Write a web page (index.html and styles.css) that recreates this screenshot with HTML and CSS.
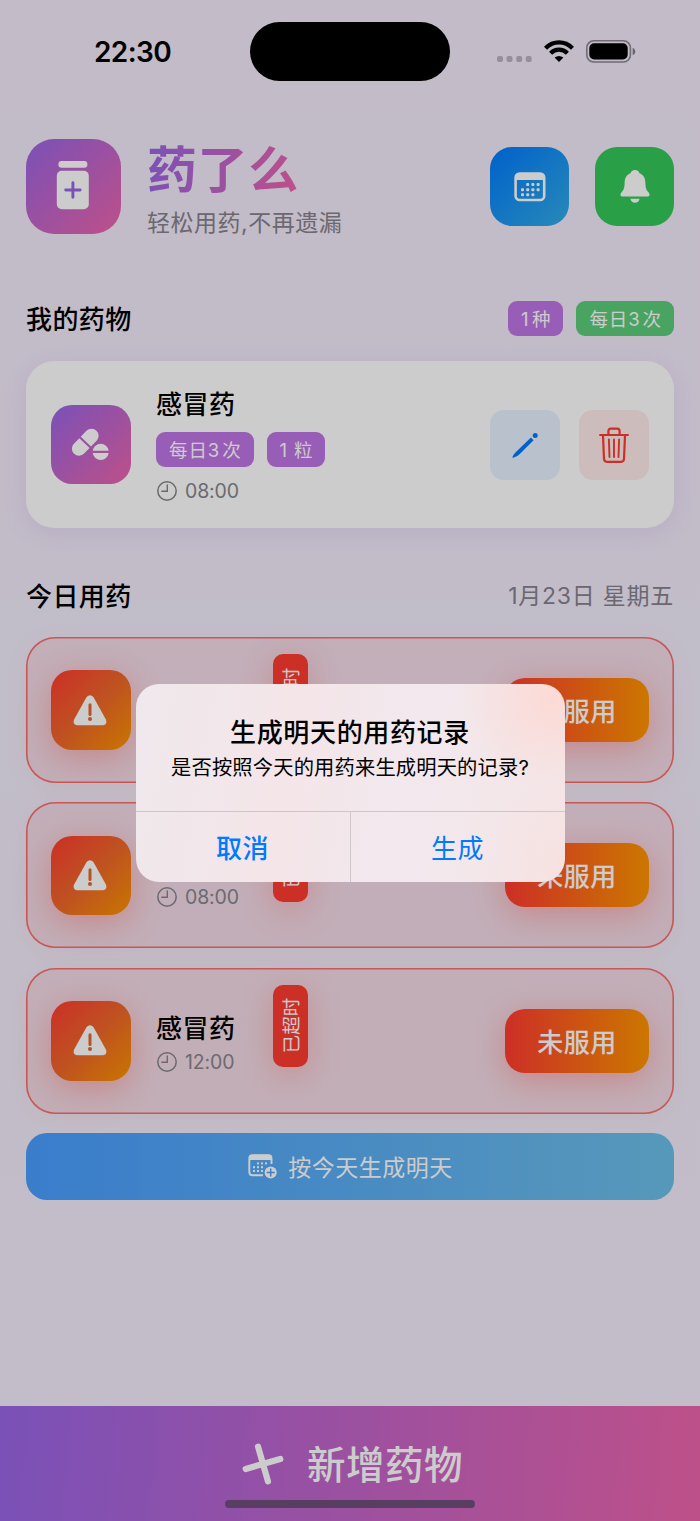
FILE: index.html
```html
<!DOCTYPE html>
<html lang="zh-CN">
<head>
<meta charset="utf-8">
<title>药了么</title>
<link rel="stylesheet" href="styles.css">
</head>
<body>
<svg class="defs" width="0" height="0" aria-hidden="true">
  <symbol id="clock" viewBox="0 0 20 20"><circle cx="10" cy="10" r="9.200" fill="none" stroke="currentColor" stroke-width="1.500"/><path d="M10.300 4v6.300H4.800" fill="none" stroke="currentColor" stroke-width="1.400" stroke-linecap="round"/></symbol>
  <symbol id="warning" viewBox="0 0 34 31"><path d="M13.600 2.100Q17-1.800 20.400 2.100L32.900 24.500Q34.700 30 29.500 30.300H4.500Q-.7 30 1.100 24.500Z" fill="#fff"/><path d="M17 9.700v9.800" stroke="#e7672a" stroke-width="3" stroke-linecap="round"/><circle cx="17" cy="24" r="2" fill="#e7672a"/></symbol>
</svg>
<div class="screen">
  <div class="status">
    <div class="time">22:30</div>
    <div class="island"></div>
    <div class="signals">
      <svg width="35" height="6" viewBox="0 0 35 6" class="dots"><g fill="#bbb3c3"><rect width="6" height="6" rx="2"/><rect x="9.500" width="6" height="6" rx="2"/><rect x="19.200" width="6" height="6" rx="2"/><rect x="28.700" width="6" height="6" rx="2"/></g></svg>
      <svg width="30" height="22" viewBox="0 0 30 22" class="wifi"><g fill="none" stroke="#000" stroke-width="4.300"><path d="M1.500 8.200C9.200.4 20.800.4 28.500 8.200"/><path d="M6.600 13.300C11.500 8.500 18.500 8.500 23.400 13.300"/></g><path d="M15 22l-4.400-4.400q4.400-3.400 8.800 0z"/></svg>
      <svg width="50" height="23" viewBox="0 0 50 23"><rect x=".8" y=".8" width="43.600" height="21.200" rx="7" fill="none" stroke="#8b8592" stroke-width="1.600"/><rect x="3.300" y="3.300" width="38.400" height="16.200" rx="4.800"/><path d="M46.700 7.800q2.600 1.200 2.600 3.700t-2.600 3.700z" fill="#7f7985"/></svg>
    </div>
  </div>

  <main class="content">
    <header class="header">
      <div class="logo"><svg width="34" height="50" viewBox="0 0 34 50"><rect x="2.400" y="0" width="29" height="6.700" rx="3.200" fill="#fff"/><rect x=".8" y="9.700" width="32" height="38.500" rx="5" fill="#fff"/><path d="M16.900 21.800v14.400M9.700 29h14.400" stroke="#9966e6" stroke-width="2.900" stroke-linecap="round"/></svg></div>
      <div class="brand">
        <h1>药了么</h1>
        <p>轻松用药,不再遗漏</p>
      </div>
      <div class="round blue"><svg width="32" height="30" viewBox="0 0 32 30"><rect x="1.600" y="1.600" width="28.600" height="26.400" rx="4" fill="none" stroke="#fff" stroke-width="2.600"/><path d="M1.300 8V4.500Q1.300 1.300 5 1.300h22q3.500 0 3.500 3.200V8z" fill="#fff"/><g fill="#fff"><rect x="12.200" y="11" width="3" height="3" rx="1"/><rect x="17.400" y="11" width="3" height="3" rx="1"/><rect x="22.600" y="11" width="3" height="3" rx="1"/><rect x="7" y="16.200" width="3" height="3" rx="1"/><rect x="12.200" y="16.200" width="3" height="3" rx="1"/><rect x="17.400" y="16.200" width="3" height="3" rx="1"/><rect x="22.600" y="16.200" width="3" height="3" rx="1"/><rect x="7" y="21.300" width="3" height="3" rx="1"/><rect x="12.200" y="21.300" width="3" height="3" rx="1"/><rect x="17.400" y="21.300" width="3" height="3" rx="1"/></g></svg></div>
      <div class="round green"><svg width="30" height="33" viewBox="0 0 30 33"><path fill="#fff" d="M15 0c2.600 0 4.100 1.500 4.500 3.200 4.600 1.700 5.800 5.700 5.900 9.800.1 5 .8 6.900 2.900 9.100 2.100 2.300 1.500 4.500-.9 4.500H2.600C.2 26.600-.4 24.400 1.700 22.100c2.100-2.200 2.800-4.100 2.900-9.100.1-4.100 1.300-8.100 5.900-9.800C10.900 1.500 12.400 0 15 0zM10.400 28.700h9.200c-.4 2.500-2.300 4-4.600 4s-4.200-1.500-4.600-4z"/></svg></div>
    </header>

    <section class="section meds">
      <div class="heading"><h2>我的药物</h2><div class="tags"><span class="tag kinds"><b>1</b>种</span><span class="tag ok">每日<b>3</b>次</span></div></div>
      <div class="card">
        <div class="tile purple"><svg width="38" height="34" viewBox="0 0 38 34"><g transform="rotate(-46 13.500 14)"><path d="M13 6.900H5.200a7.100 7.100 0 0 0 0 14.200H13z" transform="translate(-1 0)" fill="#fff"/><path d="M14 6.900h8.200a7.100 7.100 0 0 1 0 14.200H14z" fill="#fff"/></g><path d="M20.700 22.700a8.100 8.100 0 0 1 16 0zM20.700 25.100a8.100 8.100 0 0 0 16 0z" fill="#fff"/></svg></div>
        <div class="med-info">
          <h3>感冒药</h3>
          <div class="tags"><span class="tag">每日<b>3</b>次</span><span class="tag amount"><b>1</b>粒</span></div>
          <div class="clock"><svg><use href="#clock"/></svg><span>08:00</span></div>
        </div>
        <div class="actions">
          <div class="action edit"><svg width="28" height="28" viewBox="0 0 28 28"><path d="M19.900 6.500l2.700 2.700L8 23.700Q6.500 25 2.200 26.700 1.200 26.800 1.500 25.800 3.200 22.300 4.700 21.300z" fill="#007aff"/><circle cx="24.200" cy="4.400" r="2.500" fill="#007aff"/></svg></div>
          <div class="action remove"><svg width="30" height="36" viewBox="0 0 30 36"><g fill="none" stroke="#ff3b30" stroke-width="2.200" stroke-linecap="round" stroke-linejoin="round"><path d="M1.100 8h27.800M9.400 7.500V4.200q0-2.500 2.500-2.500h6.200q2.500 0 2.500 2.500v3.300M4 8.500l1 23.300q.1 3 3 3h14q2.900 0 3-3l1-23.300"/><path d="M9.900 12.500l.6 17.500M15 12.500v17.500M20.100 12.500l-.6 17.500" stroke-width="1.900"/></g></svg></div>
        </div>
      </div>
    </section>

    <section class="section today">
      <div class="heading"><h2>今日用药</h2><div class="date">1月23日 星期五</div></div>
      <div class="doses">
        <div class="dose"><div class="tile overdue"><svg width="34" height="31"><use href="#warning"/></svg></div><div class="dose-info covered"><h3>感冒药</h3><div class="clock"><svg><use href="#clock"/></svg><span>08:00</span></div></div><div class="late"><span>已超时</span></div><div class="take">未服用</div></div>
        <div class="dose"><div class="tile overdue"><svg width="34" height="31"><use href="#warning"/></svg></div><div class="dose-info"><h3 class="covered">感冒药</h3><div class="clock"><svg><use href="#clock"/></svg><span>08:00</span></div></div><div class="late"><span>已超时</span></div><div class="take">未服用</div></div>
        <div class="dose"><div class="tile overdue"><svg width="34" height="31"><use href="#warning"/></svg></div><div class="dose-info"><h3>感冒药</h3><div class="clock"><svg><use href="#clock"/></svg><span>12:00</span></div></div><div class="late"><span>已超时</span></div><div class="take">未服用</div></div>
      </div>
      <div class="generate"><svg width="29" height="25" viewBox="0 0 29 25"><path d="M15 21.300H4.500Q1.300 21.300 1.300 18V4.300Q1.300 1.200 4.500 1.200h15.800q3.200 0 3.200 3.100V10" fill="none" stroke="#fff" stroke-width="1.900"/><path d="M1 6V3.500Q1 .8 4 .8h17q2.800 0 2.800 2.700V6z" fill="#fff"/><g fill="#fff"><rect x="9" y="8.400" width="2" height="2"/><rect x="13" y="8.400" width="2" height="2"/><rect x="17" y="8.400" width="2" height="2"/><rect x="5" y="12.200" width="2" height="2"/><rect x="9" y="12.200" width="2" height="2"/><rect x="13" y="12.200" width="2" height="2"/><rect x="5" y="16" width="2" height="2"/><rect x="9" y="16" width="2" height="2"/><rect x="13" y="16" width="2" height="2"/></g><circle cx="22.700" cy="18.500" r="7.200" fill="#54a4f3"/><circle cx="22.700" cy="18.500" r="6.100" fill="#fff"/><path d="M22.700 15v7M19.200 18.500h7" stroke="#569fe6" stroke-width="1.500" stroke-linecap="round"/></svg><span>按今天生成明天</span></div>
    </section>
  </main>

  <footer class="add">
    <div class="add-label"><svg width="42" height="42" viewBox="0 0 42 42"><path d="M21 3v36M3 21h36" transform="rotate(-16 21 21)" stroke="#fff" stroke-width="6.200" stroke-linecap="round"/></svg><span>新增药物</span></div>
    <div class="home"></div>
  </footer>

  <div class="scrim"></div>
  <div class="alert">
    <div class="alert-text"><h4>生成明天的用药记录</h4><p>是否按照今天的用药来生成明天的记录?</p></div>
    <div class="alert-buttons"><div class="cancel">取消</div><div class="confirm">生成</div></div>
  </div>
</div>
</body>
</html>
```
FILE: styles.css
```css
* { box-sizing: border-box; }
body { margin: 0; font-family: Inter, "Noto Sans CJK SC", sans-serif; color: #000; }
h1, h2, h3, h4, p { margin: 0; }
svg { display: block; flex: none; }
.defs { position: absolute; }
.screen { position: relative; width: 700px; height: 1521px; display: flex; flex-direction: column; background: linear-gradient(180deg, #f4ebfa 0%, #f3eafa 33%, #f2eefc 42%, #f2ecfb 60%, #f4edfa 100%); overflow: hidden; }

.status { height: 103px; padding: 22px 64px 0 94px; display: flex; align-items: flex-start; }
.time { width: 156px; font-size: 28px; line-height: 61px; font-weight: 600; letter-spacing: -.6px; }
.island { width: 200px; height: 59px; border-radius: 30px; background: #000; }
.signals { margin-left: 47px; padding-top: 18px; display: flex; }
.dots { margin-top: 16px; }
.wifi { margin: 0 12.500px 0 11.500px; }

.content { padding: 36px 26px 0; flex: 1; }
.header { display: flex; align-items: center; height: 95px; }
.logo { width: 95px; height: 95px; border-radius: 28px; background: linear-gradient(135deg, #9966e6, #ee64ac); display: flex; align-items: center; justify-content: center; padding: 0 1px 1px 0; }
.brand { margin-left: 26px; padding-top: 5px; flex: 1; }
.brand h1 { width: 150px; white-space: nowrap; font-size: 50px; line-height: 62px; font-weight: 700; letter-spacing: .6px; margin-right: -4px; background: linear-gradient(100deg, #9966e6, #ee64ac); -webkit-background-clip: text; background-clip: text; color: transparent; }
.brand p { font-size: 23px; line-height: 34px; letter-spacing: .5px; color: #86828d; margin-top: 5px; }
.round { width: 79px; height: 79px; border-radius: 22px; display: flex; align-items: center; justify-content: center; }
.blue { background: linear-gradient(135deg, #007aff, #32ade6); }
.green { background: #34c759; margin-left: 26px; }

.section { display: flex; flex-direction: column; }
.meds { margin-top: 66px; }
.heading { display: flex; align-items: center; justify-content: space-between; height: 36px; }
h2 { font-size: 26px; line-height: 36px; font-weight: 500; letter-spacing: .4px; padding-top: 3px; }
.tags { display: flex; gap: 13px; }
.tag { height: 35px; line-height: 37px; padding: 0 12px 0 13px; border-radius: 9px; background: #bf75e5; color: #fff; font-size: 18.500px; letter-spacing: .9px; }
.tag b { font-weight: 400; margin-right: 2px; }
.kinds b { margin-right: 2.500px; }
.amount b { margin-right: 6px; }
.tag.ok { background: #5acd79; }
.card { margin-top: 25px; height: 167px; border-radius: 28px; background: #fff; box-shadow: 0 6px 24px rgba(130, 90, 220, .1); padding: 0 25px; display: flex; align-items: center; }
.tile { width: 79.500px; height: 79.500px; border-radius: 21px; display: flex; align-items: center; justify-content: center; flex: none; }
.purple { background: linear-gradient(135deg, #9966e6, #ee64ac); }
.med-info { margin-left: 25.500px; padding-top: 4px; flex: 1; }
h3 { font-size: 26px; line-height: 34px; font-weight: 500; letter-spacing: .5px; }
.med-info .tags { margin: 10px 0 10px; }
.clock { display: flex; align-items: center; gap: 8px; height: 28px; font-size: 19.500px; color: #86868a; letter-spacing: -.15px; }
.clock svg { width: 20px; height: 20px; margin-left: 1px; }
.actions { display: flex; gap: 19px; }
.action { width: 70px; height: 70px; border-radius: 14px; display: flex; align-items: center; justify-content: center; }
.edit { background: #e6f2ff; }
.remove { background: #ffebea; }

.today { margin-top: 50px; }
.today h2 { padding-top: 1px; }
.date { font-size: 23px; line-height: 32px; letter-spacing: .75px; color: #86828d; }
.doses { margin-top: 23px; display: flex; flex-direction: column; gap: 19.400px; }
.dose { height: 146px; border-radius: 29px; background: rgba(255, 59, 48, .1); box-shadow: inset 0 0 0 1.600px rgba(255, 59, 48, .68), 0 4px 26px rgba(255, 59, 48, .05); padding: 0 25px; display: flex; align-items: center; }
.overdue { background: linear-gradient(135deg, #ff3b30, #ef672a 50%, #fc9300); box-shadow: 0 8px 32px rgba(255, 59, 48, .3); padding-right: 1px; }
.dose-info { margin-left: 25.500px; width: 117px; padding-top: 7px; }
.dose-info .clock { margin-top: 2px; }
.covered { visibility: hidden; }
.late { width: 35px; height: 82.500px; margin-top: -30px; border-radius: 10px; background: #ff3b30; box-shadow: 0 7px 32px rgba(255, 59, 48, .25); color: #fff; display: flex; align-items: center; justify-content: center; }
.late span { font-size: 18.500px; line-height: 20px; padding-top: 1px; white-space: nowrap; transform: rotate(-90deg); }
.take { margin-left: auto; width: 144px; height: 64px; border-radius: 20px; background: linear-gradient(90deg, #ff3b30, #ff9500); box-shadow: 0 8px 32px rgba(255, 59, 48, .3); color: #fff; text-align: center; font-size: 26px; line-height: 68px; font-weight: 500; letter-spacing: .5px; }
.generate { margin-top: 19.400px; height: 67px; border-radius: 21px; background: linear-gradient(90deg, #499dff, #6dbfe9); color: #fff; display: flex; align-items: center; justify-content: center; gap: 11px; padding-left: 1px; font-size: 23px; letter-spacing: .5px; }
.generate span { padding-bottom: 2px; }

.add { height: 115px; background: linear-gradient(95deg, #9966e6, #ee64ac); display: flex; flex-direction: column; align-items: center; color: #fff; }
.add-label { display: flex; align-items: center; gap: 23px; height: 94px; padding: 21px 0 0 5px; font-size: 38.500px; font-weight: 500; letter-spacing: .5px; }
.add-label span { margin-top: -4px; }
.home { width: 250px; height: 8px; border-radius: 4px; background: #6f4e79; }

.scrim { position: absolute; inset: 0; background: rgba(0, 0, 0, .2); }
.alert { position: absolute; left: 135.500px; top: 684px; width: 429px; height: 198px; border-radius: 23px; overflow: hidden; background: radial-gradient(circle at 97% 8%, rgba(253, 216, 209, .85), transparent 20%), radial-gradient(circle at 102% 92%, rgba(250, 221, 217, .6), transparent 20%), linear-gradient(100deg, #efe8ec 0%, #f2e7eb 20%, #f4e5e8 36%, #f2e8ed 60%, #f4e6e8 100%); display: flex; flex-direction: column; text-align: center; }
.alert-text { height: 127px; padding-top: 30px; }
h4 { font-size: 26px; line-height: 38px; font-weight: 500; letter-spacing: .65px; }
.alert p { font-size: 20.300px; line-height: 31px; letter-spacing: .15px; }
.alert-buttons { height: 71px; flex: none; display: flex; border-top: 1px solid #cfc5ca; font-size: 26px; line-height: 73px; letter-spacing: .5px; color: #007aff; }
.cancel, .confirm { flex: 1; }
.cancel { font-weight: 500; border-right: 1px solid #cfc5ca; }
```
